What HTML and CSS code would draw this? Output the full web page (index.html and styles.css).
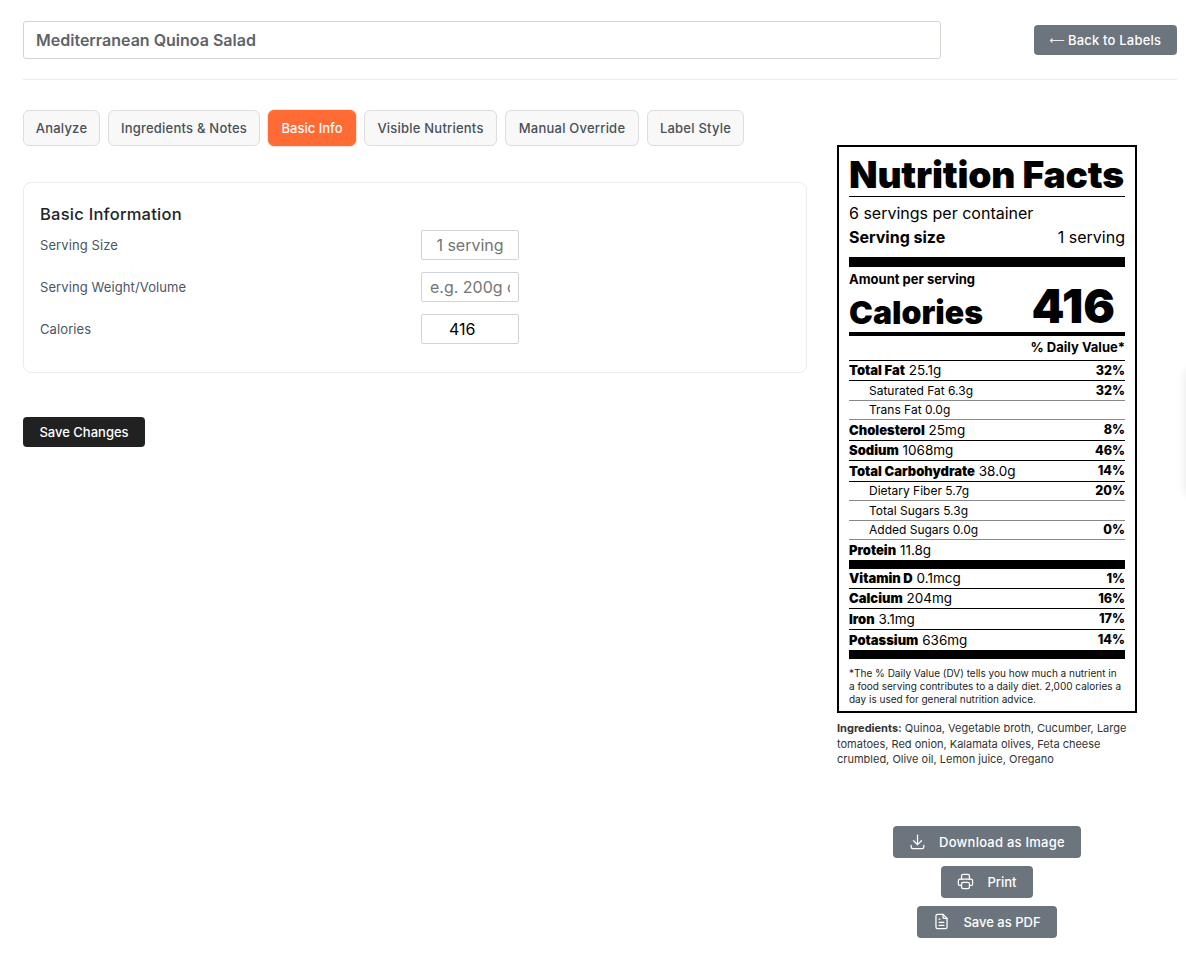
FILE: index.html
```html
<!DOCTYPE html>
<html lang="en">
<head>
    <meta charset="UTF-8">
    <meta name="viewport" content="width=device-width, initial-scale=1.0">
    <title>Edit Label</title>
    <link rel="stylesheet" href="styles.css">
</head>
<body>
    <div class="page">
        <header class="top-bar">
            <input type="text" class="title-input" value="Mediterranean Quinoa Salad">
            <a class="btn back-btn" href="#"><span class="arrow">&#10229;</span> Back to Labels</a>
        </header>

        <div class="columns">
            <main class="editor">
                <nav class="tabs">
                    <button class="tab tab-analyze">Analyze</button>
                    <button class="tab tab-ingredients">Ingredients &amp; Notes</button>
                    <button class="tab tab-basic active">Basic Info</button>
                    <button class="tab tab-visible">Visible Nutrients</button>
                    <button class="tab tab-override">Manual Override</button>
                    <button class="tab tab-style">Label Style</button>
                </nav>

                <section class="card">
                    <h2>Basic Information</h2>
                    <div class="field">
                        <label>Serving Size</label>
                        <input type="text" class="field-input" placeholder="1 serving">
                    </div>
                    <div class="field">
                        <label>Serving Weight/Volume</label>
                        <input type="text" class="field-input left" placeholder="e.g. 200g or 1 cup">
                    </div>
                    <div class="field">
                        <label>Calories</label>
                        <input type="text" class="field-input filled" value="416">
                    </div>
                </section>

                <button class="save-btn">Save Changes</button>
            </main>

            <aside class="preview">
                <div class="label">
                    <div class="label-title">Nutrition Facts</div>
                    <div class="servings">6 servings per container</div>
                    <div class="serving-size"><b>Serving size</b><span>1 serving</span></div>
                    <div class="bar bar-top"></div>
                    <div class="amount">Amount per serving</div>
                    <div class="calories"><b>Calories</b><span>416</span></div>
                    <div class="bar bar-thin"></div>
                    <div class="dv-head">% Daily Value*</div>

                    <div class="row"><span><b>Total Fat</b> 25.1g</span><b>32%</b></div>
                    <div class="row sub"><span>Saturated Fat 6.3g</span><b>32%</b></div>
                    <div class="row sub"><span>Trans Fat 0.0g</span></div>
                    <div class="row"><span><b>Cholesterol</b> 25mg</span><b>8%</b></div>
                    <div class="row"><span><b>Sodium</b> 1068mg</span><b>46%</b></div>
                    <div class="row"><span><b>Total Carbohydrate</b> 38.0g</span><b>14%</b></div>
                    <div class="row sub"><span>Dietary Fiber 5.7g</span><b>20%</b></div>
                    <div class="row sub"><span>Total Sugars 5.3g</span></div>
                    <div class="row sub"><span>Added Sugars 0.0g</span><b>0%</b></div>
                    <div class="row last protein"><span><b>Protein</b> 11.8g</span></div>
                    <div class="bar bar-mid"></div>
                    <div class="row vit"><span><b>Vitamin D</b> 0.1mcg</span><b>1%</b></div>
                    <div class="row"><span><b>Calcium</b> 204mg</span><b>16%</b></div>
                    <div class="row"><span><b>Iron</b> 3.1mg</span><b>17%</b></div>
                    <div class="row last"><span><b>Potassium</b> 636mg</span><b>14%</b></div>
                    <div class="bar bar-mid"></div>
                    <p class="footnote">*The % Daily Value (DV) tells you how much a nutrient in a food serving contributes to a daily diet. 2,000 calories a day is used for general nutrition advice.</p>
                </div>

                <p class="ingredients"><b>Ingredients:</b> Quinoa, Vegetable broth, Cucumber, Large tomatoes, Red onion, Kalamata olives, Feta cheese crumbled, Olive oil, Lemon juice, Oregano</p>

                <div class="actions">
                    <button class="btn action-btn wide">
                        <svg viewBox="0 0 24 24"><path d="M4 17v2a2 2 0 0 0 2 2h12a2 2 0 0 0 2-2v-2"/><path d="M7 11l5 5 5-5"/><path d="M12 4v12"/></svg>
                        Download as Image
                    </button>
                    <button class="btn action-btn">
                        <svg viewBox="0 0 24 24"><path d="M17 17h2a2 2 0 0 0 2-2v-4a2 2 0 0 0-2-2H5a2 2 0 0 0-2 2v4a2 2 0 0 0 2 2h2"/><path d="M17 9V5a2 2 0 0 0-2-2H9a2 2 0 0 0-2 2v4"/><rect x="7" y="13" width="10" height="8" rx="2"/></svg>
                        Print
                    </button>
                    <button class="btn action-btn">
                        <svg viewBox="0 0 24 24"><path d="M14 3v4a1 1 0 0 0 1 1h4"/><path d="M17 21H7a2 2 0 0 1-2-2V5a2 2 0 0 1 2-2h7l5 5v11a2 2 0 0 1-2 2z"/><path d="M9 9h1"/><path d="M9 13h6"/><path d="M9 17h6"/></svg>
                        Save as PDF
                    </button>
                </div>
            </aside>
        </div>
    </div>
    <div class="edge-shadow"></div>
</body>
</html>
```

FILE: styles.css
```css
* {
    margin: 0;
    padding: 0;
    box-sizing: border-box;
}

body {
    font-family: 'Inter', 'Liberation Sans', sans-serif;
    background: #fff;
    color: #212529;
    overflow: hidden;
}

.page {
    height: 953px;
    padding: 21px 9px 0 23px;
}

.top-bar {
    display: flex;
    align-items: center;
    justify-content: space-between;
    padding-bottom: 20px;
    border-bottom: 1px solid #e9ecef;
}

.title-input {
    width: 918px;
    height: 38px;
    padding: 0 12px;
    border: 1px solid #ced4da;
    border-radius: 3px;
    font-family: inherit;
    font-size: 16px;
    font-weight: 600;
    color: #5f6368;
}

.btn {
    background: #6c757d;
    color: #fff;
    border: none;
    border-radius: 4px;
    font-family: inherit;
    font-size: 13px;
    font-weight: 500;
    text-decoration: none;
}

.back-btn {
    display: flex;
    align-items: center;
    justify-content: center;
    gap: 3px;
    width: 143px;
    height: 30px;
    letter-spacing: 0.2px;
    white-space: nowrap;
}

.arrow {
    font-family: 'DejaVu Sans', sans-serif;
    font-size: 10.5px;
    line-height: 1;
    letter-spacing: 0;
}

.columns {
    display: flex;
    gap: 30px;
    padding-top: 30px;
}

.editor {
    width: 784px;
}

.tabs {
    display: flex;
    gap: 8px;
    margin-bottom: 36px;
}

.tab {
    height: 36px;
    background: #f8f8f8;
    border: 1px solid #dedede;
    border-radius: 6px;
    font-family: inherit;
    font-size: 13px;
    font-weight: 500;
    letter-spacing: 0.22px;
    color: #495057;
}

.tab-analyze { width: 77px; }
.tab-ingredients { width: 152px; }
.tab-basic { width: 88px; }
.tab-visible { width: 133px; }
.tab-override { width: 134px; }
.tab-style { width: 97px; }

.tab.active {
    background: #ff6b35;
    border-color: #ff6b35;
    color: #fff;
    letter-spacing: 0;
    box-shadow: 0 0 0 1px #ffe1d6;
}

.card {
    height: 191px;
    padding: 22px 16px 0;
    border: 1px solid #e9ecef;
    border-radius: 8px;
}

.card h2 {
    font-size: 16.5px;
    font-weight: 500;
    line-height: 19px;
    letter-spacing: 0.25px;
    color: #212529;
    margin-bottom: 6px;
}

.field {
    display: flex;
    align-items: center;
    height: 30px;
    margin-bottom: 12px;
}

.field label {
    width: 381px;
    font-size: 13px;
    letter-spacing: 0.1px;
    color: #4b5563;
}

.field-input {
    width: 98px;
    height: 30px;
    padding: 0 8px;
    border: 1px solid #ced4da;
    border-radius: 2px;
    font-family: inherit;
    font-size: 16px;
    text-align: center;
    color: #000;
}

.field-input::placeholder {
    color: #757575;
}

.field-input.left {
    text-align: left;
}

.field-input.filled {
    text-align: left;
    padding-left: 27px;
}

.save-btn {
    display: block;
    width: 122px;
    height: 30px;
    margin-top: 44px;
    background: #212121;
    color: #fff;
    border: none;
    border-radius: 4px;
    font-family: inherit;
    font-size: 13px;
    font-weight: 500;
}

.preview {
    width: 300px;
    padding-top: 35px;
}

.label {
    height: 568px;
    padding: 8px 10px 0;
    border: 2px solid #000;
    color: #000;
}

.label-title {
    font-size: 37.2px;
    font-weight: 900;
    line-height: 40px;
    letter-spacing: -0.2px;
    white-space: nowrap;
    border-bottom: 1px solid #000;
    height: 42px;
}

.servings {
    margin-top: 6px;
    font-size: 16px;
    line-height: 20px;
}

.serving-size {
    display: flex;
    justify-content: space-between;
    margin-top: 4px;
    font-size: 16px;
    line-height: 20px;
}

.bar {
    background: #000;
}

.bar-top {
    height: 10px;
    margin-top: 10px;
}

.bar-thin {
    height: 4px;
}

.bar-mid {
    height: 9px;
}

.amount {
    margin-top: 4px;
    font-size: 13px;
    font-weight: 700;
    line-height: 16px;
}

.calories {
    display: flex;
    justify-content: space-between;
    align-items: flex-end;
    height: 45px;
}

.calories b {
    font-size: 32px;
    font-weight: 900;
    line-height: 38px;
}

.calories span {
    font-size: 47px;
    font-weight: 900;
    line-height: 52px;
    padding-right: 10px;
}

.dv-head {
    height: 24.5px;
    font-size: 13px;
    font-weight: 700;
    line-height: 22px;
    text-align: right;
    border-bottom: 1px solid #000;
}

.row {
    display: flex;
    justify-content: space-between;
    align-items: center;
    height: 20.5px;
    font-size: 13.5px;
    border-bottom: 1px solid #000;
}

.row b {
    font-size: 13px;
    font-weight: 900;
}

.row > b {
    font-size: 12.6px;
    font-weight: 800;
}

.row.sub {
    height: 19.5px;
    padding-left: 20px;
    font-size: 12px;
    border-bottom-color: #888;
}

.row.last {
    border-bottom: none;
}

.row.protein {
    height: 20px;
}

.row.vit {
    height: 19.5px;
}

.footnote {
    margin-top: 8px;
    font-size: 10px;
    line-height: 13px;
    color: #222;
}

.ingredients {
    margin-top: 8px;
    font-size: 11px;
    line-height: 15.5px;
    color: #333;
}

.ingredients b {
    font-weight: 700;
}

.actions {
    display: flex;
    flex-direction: column;
    align-items: center;
    gap: 8px;
    margin-top: 58px;
}

.action-btn {
    display: flex;
    align-items: center;
    gap: 12.5px;
    height: 32px;
    padding: 0 16px 0 14.5px;
}

.action-btn.wide {
    letter-spacing: 0.24px;
}

.action-btn svg {
    width: 19px;
    height: 19px;
    fill: none;
    stroke: #fff;
    stroke-width: 1.6;
    stroke-linecap: round;
    stroke-linejoin: round;
}

.edge-shadow {
    position: fixed;
    top: 370px;
    right: -8px;
    width: 8px;
    height: 125px;
    box-shadow: 0 0 10px rgba(0, 0, 0, 0.1);
}
```
